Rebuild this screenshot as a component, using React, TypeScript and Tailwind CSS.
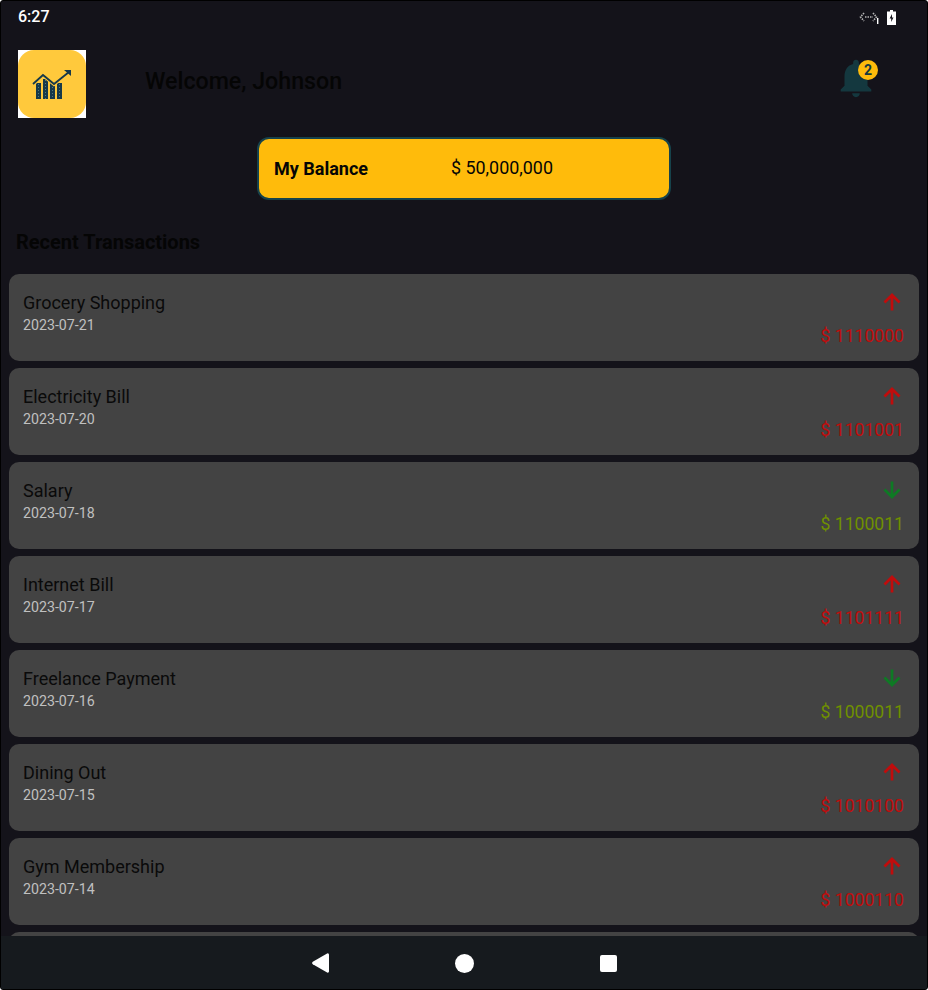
import React from "react";

const rows = [
  ["Grocery Shopping", "2023-07-21", "1110000", "up"],
  ["Electricity Bill", "2023-07-20", "1101001", "up"],
  ["Salary", "2023-07-18", "1100011", "down"],
  ["Internet Bill", "2023-07-17", "1101111", "up"],
  ["Freelance Payment", "2023-07-16", "1000011", "down"],
  ["Dining Out", "2023-07-15", "1010100", "up"],
  ["Gym Membership", "2023-07-14", "1000110", "up"],
];

function Arrow({ up }: { up: boolean }) {
  return (
    <svg width="24" height="24" viewBox="0 0 24 24" fill="none" stroke={up ? "#c00c0c" : "#0e7a24"} strokeWidth="2.7">
      {up ? (
        <path d="M12 20.500V5M4.500 12.500L12 5l7.500 7.500" />
      ) : (
        <path d="M12 3.500V19M4.500 11.500L12 19l7.500-7.500" />
      )}
    </svg>
  );
}

function Logo() {
  return (
    <div className="w-[68px] h-[68px] bg-white shrink-0">
      <div className="w-full h-full rounded-[16px] bg-[#ffc93c] flex items-center justify-center">
        <svg width="40" height="30" viewBox="0 0 40 30" className="mt-[1px]">
          <g fill="#17394a">
            <rect x="4" y="13" width="5" height="16" />
            <rect x="11" y="9" width="5" height="20" />
            <rect x="18" y="13" width="5" height="16" />
            <rect x="25" y="13" width="5" height="16" />
          </g>
          <g stroke="#6f9a8f" strokeWidth="0.7" strokeDasharray="1 2">
            <path d="M6.500 14v15M13.500 10v19M20.500 14v15M27.500 14v15" />
          </g>
          <path d="M1 14L11 5l11 9L37 2" fill="none" stroke="#ffc93c" strokeWidth="4" />
          <path d="M1 14L11 5l11 9L37 2" fill="none" stroke="#17394a" strokeWidth="1.8" />
          <path d="M32 0h7v6z" fill="#17394a" />
        </svg>
      </div>
    </div>
  );
}

export default function App() {
  return (
    <div
      className="w-[928px] h-[990px] bg-[#14131a] border border-black rounded-[3px] overflow-hidden flex flex-col"
      style={{ fontFamily: "Roboto, sans-serif" }}
    >
      <div className="h-[31px] pt-[1px] shrink-0 flex items-center justify-between pl-[17px] pr-[31px]">
        <span className="text-white text-[16px] font-medium">6:27</span>
        <div className="flex items-center gap-[8px]">
          <svg width="20" height="14" viewBox="0 0 20 14" fill="none" stroke="#b5b5b5" strokeWidth="1.6">
            <path d="M5 3L1.500 7 5 11M14 3l3.500 4L14 11M6 7h8" strokeDasharray="1.500 1" />
            <rect x="18" y="8" width="1.400" height="6" fill="#fff" stroke="none" />
          </svg>
          <svg width="9" height="15" viewBox="0 0 9 15">
            <path d="M3 0h3v1.500h3V15H0V1.500h3z" fill="#fff" />
            <path d="M5 4L2.600 8.500h1.600V12L6.500 7.500H5z" fill="#14131a" />
          </svg>
        </div>
      </div>

      <div className="h-[68px] mt-[18px] shrink-0 flex items-center pl-[17px] relative">
        <Logo />
        <span className="ml-[59px] mb-[6px] text-[23.200px] font-medium text-[#050505]">Welcome, Johnson</span>
        <div className="ml-auto mr-[48px] relative w-[46px] h-[46px] top-[-6px]">
          <svg width="46" height="46" viewBox="0 0 24 24" fill="#14383f">
            <path d="M12 22c1.100 0 2-.9 2-2h-4c0 1.100.9 2 2 2zm6-6v-5c0-3.070-1.630-5.640-4.500-6.320V4c0-.830-.670-1.500-1.500-1.500s-1.500.670-1.500 1.500v.680C7.640 5.360 6 7.920 6 11v5l-2 2v1h16v-1l-2-2z" />
          </svg>
          <span className="absolute left-[25px] top-[5px] w-5 h-5 rounded-full bg-[#ffbb0b] text-[#14383f] text-[14px] font-bold flex items-center justify-center">
            2
          </span>
        </div>
      </div>

      <div className="mt-[19px] ml-[256px] w-[414px] h-[63px] shrink-0 bg-[#ffbb0b] border-2 border-[#16424b] rounded-[12px] flex items-center pl-[15px] pb-[1px]">
        <span className="w-[177px] text-[18px] font-bold text-[#050505]">My Balance</span>
        <span className="text-[17.900px] text-[#050505]">$ 50,000,000</span>
      </div>

      <div className="mt-[30px] ml-[15px] h-[24px] shrink-0 flex items-center text-[20px] font-bold text-[#050505]">
        Recent Transactions
      </div>

      <div className="mt-[20px] mx-[8px] flex flex-col gap-[7px] flex-1 min-h-0 overflow-hidden">
        {rows.map(([name, date, amount, dir], i) => (
          <div
            key={i}
            className="h-[87px] shrink-0 bg-[#434343] rounded-[10px] flex justify-between pl-[14px] pr-[15px]"
          >
            <div className="pt-[18px]">
              <div className="text-[18px] leading-[22px] text-[#0a0a0a]">{name}</div>
              <div className="text-[14.200px] leading-[20px] text-[#c0c0c0] mt-[1px]">{date}</div>
            </div>
            <div className="flex flex-col items-end">
              <div className="mt-[16px] h-[24px]">
                <Arrow up={dir === "up"} />
              </div>
              <div
                className={`mt-[10px] text-[17.600px] leading-[24px] ${dir === "up" ? "text-[#c00c0c]" : "text-[#6f9000]"}`}
              >
                $ {amount}
              </div>
            </div>
          </div>
        ))}
        <div className="h-[87px] shrink-0 bg-[#434343] rounded-[10px]" />
      </div>

      <div className="h-[53px] pt-[1px] shrink-0 bg-[#161a1e] flex items-center justify-center -mx-px">
        <div className="flex items-center gap-[126px] ml-[1px]">
          <svg width="17" height="20" viewBox="0 0 17 20">
            <path d="M17 1.500v17a1.300 1.300 0 0 1-1.900 1.100L.8 11.200a1.400 1.400 0 0 1 0-2.400L15.100.4A1.300 1.300 0 0 1 17 1.500z" fill="#fff" />
          </svg>
          <div className="w-[19px] h-[19px] rounded-full bg-white" />
          <div className="w-[17px] h-[17px] rounded-[2px] bg-white" />
        </div>
      </div>
    </div>
  );
}
